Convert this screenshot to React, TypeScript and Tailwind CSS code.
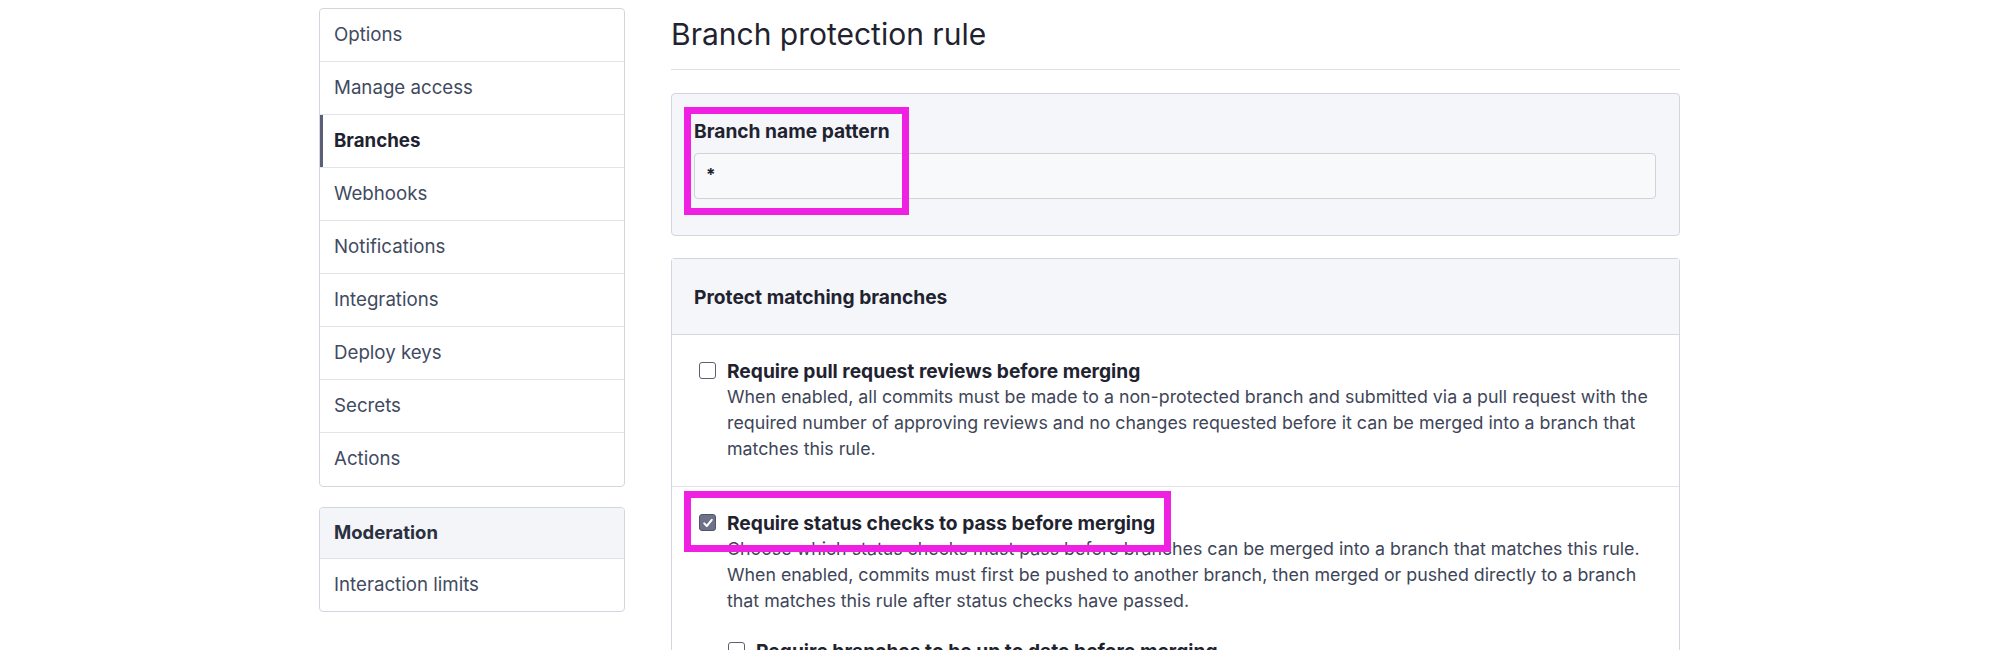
import React from 'react'

const font = { fontFamily: 'Inter, "Noto Sans", sans-serif' }

const menu = ['Options', 'Manage access', 'Branches', 'Webhooks', 'Notifications', 'Integrations', 'Deploy keys', 'Secrets', 'Actions']

function Checkbox({ checked }: { checked?: boolean }) {
  if (checked) {
    return (
      <span className="mt-[4px] flex h-[17px] w-[17px] shrink-0 items-center justify-center rounded-[3px] border border-[#4f556b] bg-[#6d7288]">
        <svg viewBox="0 0 12 12" className="h-[12px] w-[12px]" fill="none" stroke="white" strokeWidth="2" strokeLinecap="round" strokeLinejoin="round">
          <path d="M2.2 6.4 4.8 9 9.8 2.8" />
        </svg>
      </span>
    )
  }
  return <span className="mt-[4px] block h-[17px] w-[17px] shrink-0 rounded-[3px] border border-[#5b6070] bg-white" />
}

function Rule({ checked, title, children }: { checked?: boolean; title: string; children: React.ReactNode }) {
  return (
    <div className="flex gap-[11px]">
      <Checkbox checked={checked} />
      <div>
        <div className="whitespace-nowrap text-[19.2px] font-bold leading-[26px] text-[#1f2330]">{title}</div>
        <div className="whitespace-nowrap text-[17.8px] leading-[26px] text-[#3e4558]">{children}</div>
      </div>
    </div>
  )
}

export default function App() {
  return (
    <div className="h-[650px] w-[2000px] overflow-hidden bg-white" style={font}>
      <div className="flex gap-[46px] pl-[319px] pt-[8px]">
        {/* Sidebar */}
        <div className="w-[306px] shrink-0">
          <nav className="overflow-hidden rounded-[4px] border border-[#d3d6de]">
            {menu.map((item, i) => (
              <div
                key={item}
                className={
                  'flex h-[53px] items-center px-[14px] text-[18.7px] ' +
                  (i < menu.length - 1 ? 'border-b border-[#e2e4ea] ' : '') +
                  (item === 'Branches'
                    ? 'relative font-bold text-[#1f2330]'
                    : 'text-[#414a5f]')
                }
              >
                {item === 'Branches' && <span className="absolute left-0 top-0 h-full w-[3px] bg-[#5a5f76]" />}
                {item}
              </div>
            ))}
          </nav>
          <nav className="mt-[20px] overflow-hidden rounded-[4px] border border-[#d3d6de]">
            <div className="flex h-[51px] items-center border-b border-[#dfe1e7] bg-[#f4f5f9] px-[14px] text-[18.5px] font-bold text-[#2a3040]">
              Moderation
            </div>
            <div className="flex h-[52px] items-center px-[14px] text-[18.7px] text-[#414a5f]">Interaction limits</div>
          </nav>
        </div>

        {/* Main */}
        <div className="w-[1009px] shrink-0">
          <h1 className="border-b border-[#dcdfe5] pb-[17px] pt-[8px] text-[30px] font-normal leading-[36px] text-[#1f2330]">
            Branch protection rule
          </h1>

          <div className="relative mt-[23px] rounded-[4px] border border-[#d3d6de] bg-[#f5f6fa] pb-[36px] pl-[22px] pr-[23px] pt-[25px]">
            <div className="text-[19.2px] font-bold leading-[24px] text-[#1f2330]">Branch name pattern</div>
            <div className="mt-[10px] flex h-[46px] w-full items-center rounded-[4px] border border-[#cfd3da] bg-[#f8f9fb] px-[11px] text-[17px] font-bold text-[#1f2330]">
              *
            </div>
            <div className="absolute left-[12px] top-[13px] h-[108px] w-[225px] border-[7px] border-[#ef20e2]" />
          </div>

          <div className="mt-[22px] rounded-t-[4px] border border-b-0 border-[#d3d6de]">
            <div className="border-b border-[#d5d8df] bg-[#f5f6fa] px-[22px] pb-[25px] pt-[26px] text-[19.2px] font-bold leading-[24px] text-[#1f2330]">
              Protect matching branches
            </div>
            <div className="border-b border-[#e1e3e9] pb-[24px] pl-[27px] pr-[20px] pt-[23px]">
              <Rule title="Require pull request reviews before merging">
                When enabled, all commits must be made to a non-protected branch and submitted via a pull request with the
                <br />
                required number of approving reviews and no changes requested before it can be merged into a branch that
                <br />
                matches this rule.
              </Rule>
            </div>
            <div className="relative pb-[22px] pl-[27px] pr-[20px] pt-[23px]">
              <Rule checked title="Require status checks to pass before merging">
                Choose which status checks must pass before branches can be merged into a branch that matches this rule.
                <br />
                When enabled, commits must first be pushed to another branch, then merged or pushed directly to a branch
                <br />
                that matches this rule after status checks have passed.
              </Rule>
              <div className="ml-[29px] mt-[24px]">
                <Rule title="Require branches to be up to date before merging">
                  This ensures pull requests targeting a matching branch have been tested with the latest code.
                </Rule>
              </div>
              <div className="absolute left-[12px] top-[4px] h-[61px] w-[487px] border-[7px] border-[#ef20e2]" />
            </div>
          </div>
        </div>
      </div>
    </div>
  )
}
